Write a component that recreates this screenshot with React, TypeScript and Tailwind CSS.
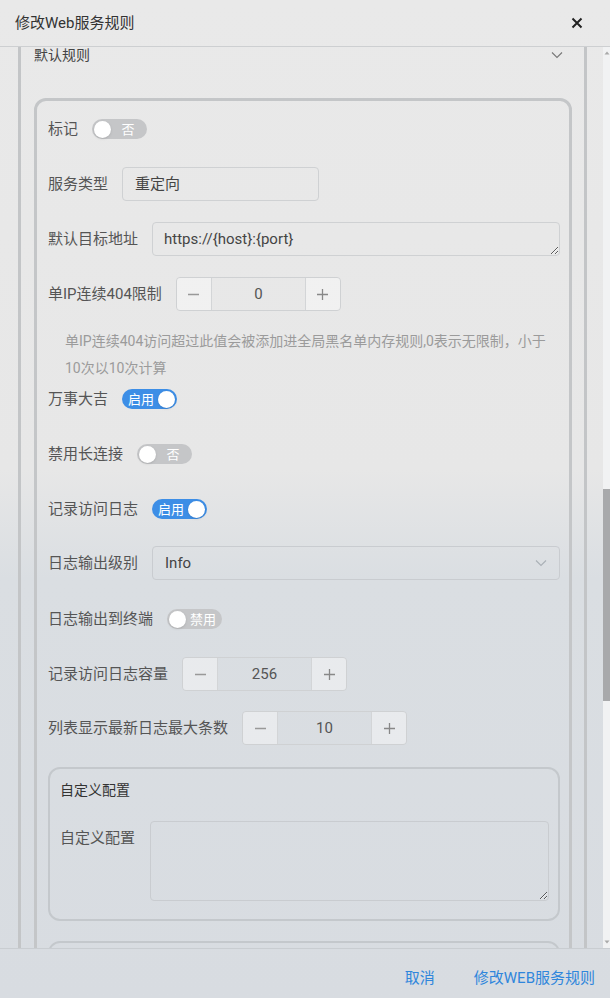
import type { ReactNode } from 'react'

function Toggle({ on, text }: { on: boolean; text: string }) {
  return (
    <span
      className={`flex h-[20px] w-[55px] shrink-0 items-center rounded-full px-[2px] ${on ? 'bg-[#3d8ee6]' : 'bg-[#c5c6c8]'}`}
    >
      {on ? null : <span className="h-[17px] w-[17px] rounded-full bg-white shadow-sm" />}
      <span className="flex-1 text-center text-[13px] leading-none text-white">{text}</span>
      {on ? <span className="h-[17px] w-[17px] rounded-full bg-white shadow-sm" /> : null}
    </span>
  )
}

function Stepper({ value }: { value: string }) {
  return (
    <div className="flex h-[34px] w-[165px] shrink-0 overflow-hidden rounded-[4px] border border-[#cfd1d3]">
      <span className="flex w-[35px] items-center justify-center border-r border-[#d3d5d7] bg-white/40">
        <svg width="13" height="13" viewBox="0 0 13 13">
          <path d="M1 6.5h11" stroke="#999" strokeWidth="1.3" />
        </svg>
      </span>
      <span className="flex flex-1 items-center justify-center text-[15px] text-[#555]">{value}</span>
      <span className="flex w-[35px] items-center justify-center border-l border-[#d3d5d7] bg-white/40">
        <svg width="13" height="13" viewBox="0 0 13 13">
          <path d="M1 6.5h11M6.5 1v11" stroke="#888" strokeWidth="1.3" />
        </svg>
      </span>
    </div>
  )
}

function Row({ label, children, className = '' }: { label: string; children: ReactNode; className?: string }) {
  return (
    <div className={`flex h-[34px] items-center gap-[14px] ${className}`}>
      <span className="shrink-0 text-[15px] text-[#555]">{label}</span>
      {children}
    </div>
  )
}

function Chevron({ color }: { color: string }) {
  return (
    <svg width="12" height="8" viewBox="0 0 12 8">
      <path d="M1 1.5l5 5 5-5" fill="none" stroke={color} strokeWidth="1.1" />
    </svg>
  )
}

export default function App() {
  return (
    <div className="flex h-[998px] w-[610px] flex-col overflow-hidden bg-[linear-gradient(180deg,#e9e9e9_0%,#e7e7e7_47%,#dadee2_58%,#d8dce1_100%)] font-['Roboto','Noto_Sans_CJK_SC',sans-serif]">
      <header className="flex h-[47px] shrink-0 items-center justify-between border-b border-[#cdcfd1] pl-[15px] pr-[27px]">
        <h1 className="text-[15px] text-[#333]">修改Web服务规则</h1>
        <svg width="12" height="12" viewBox="0 0 12 12">
          <path d="M1.5 1.5l9 9M10.5 1.5l-9 9" stroke="#222" strokeWidth="2" />
        </svg>
      </header>

      <div className="flex min-h-0 flex-1">
        <div className="min-w-0 flex-1 overflow-hidden pl-[18px] pr-[16px]">
          <div className="h-full border-x-[3px] border-[#c3c5c7] pl-[13px] pr-[12px]">
            <div className="flex h-[16px] items-center justify-between pr-[9px]">
              <span className="text-[14px] text-[#444]">默认规则</span>
              <Chevron color="#777" />
            </div>

            <section className="mt-[35px] rounded-[12px] border-[3px] border-[#c4c6c8] pb-[40px] pl-[11px] pr-[9px] pt-[11px]">
              <Row label="标记" className="mb-[21px]">
                <Toggle on={false} text="否" />
              </Row>
              <Row label="服务类型" className="mb-[21px]">
                <div className="flex h-[34px] w-[197px] items-center rounded-[4px] border border-[#cfd1d3] px-[12px] text-[15px] text-[#444]">
                  重定向
                </div>
              </Row>
              <Row label="默认目标地址" className="mb-[21px]">
                <textarea
                  readOnly
                  value="https://{host}:{port}"
                  className="h-[34px] min-w-0 flex-1 rounded-[4px] border border-[#cfd1d3] bg-transparent px-[11px] py-[5px] text-[15px] leading-[22px] text-[#444] outline-none"
                />
              </Row>
              <Row label="单IP连续404限制">
                <Stepper value="0" />
              </Row>
              <p className="mt-[17px] pl-[17px] text-[14px] leading-[27px] text-[#9b9b9b]">
                单IP连续404访问超过此值会被添加进全局黑名单内存规则,0表示无限制，小于
                <br />
                10次以10次计算
              </p>
              <Row label="万事大吉" className="mb-[21px]">
                <Toggle on text="启用" />
              </Row>
              <Row label="禁用长连接" className="mb-[21px]">
                <Toggle on={false} text="否" />
              </Row>
              <Row label="记录访问日志" className="mb-[20px]">
                <Toggle on text="启用" />
              </Row>
              <Row label="日志输出级别" className="mb-[22px]">
                <div className="flex h-[34px] min-w-0 flex-1 items-center justify-between rounded-[4px] border border-[#c9ccd0] pl-[12px] pr-[12px] text-[15px] text-[#444]">
                  <span>Info</span>
                  <Chevron color="#aab0b6" />
                </div>
              </Row>
              <Row label="日志输出到终端" className="mb-[21px]">
                <Toggle on={false} text="禁用" />
              </Row>
              <Row label="记录访问日志容量" className="mb-[20px]">
                <Stepper value="256" />
              </Row>
              <Row label="列表显示最新日志最大条数">
                <Stepper value="10" />
              </Row>

              <div className="mt-[22px] rounded-[12px] border-2 border-[#c4c8cc] pb-[18px] pl-[10px] pr-[9px] pt-[11px]">
                <h3 className="text-[14px] leading-[20px] text-[#333]">自定义配置</h3>
                <div className="mt-[21px] flex gap-[15px]">
                  <span className="shrink-0 pt-[6px] text-[15px] leading-[22px] text-[#555]">自定义配置</span>
                  <textarea
                    readOnly
                    className="h-[80px] min-w-0 flex-1 rounded-[4px] border border-[#c9ccd0] bg-transparent outline-none"
                  />
                </div>
              </div>

              <div className="mt-[20px] h-[80px] rounded-[12px] border-2 border-[#c4c8cc]" />
            </section>
          </div>
        </div>

        <div className="flex w-[7px] shrink-0 flex-col items-center bg-[#f1f2f3]">
          <svg className="mt-[4px]" width="6" height="4" viewBox="0 0 6 4">
            <path d="M3 0.5L5.5 3.5H0.5z" fill="#a9a9a9" />
          </svg>
          <div className="mt-[434px] h-[212px] w-full bg-[#a8a9ab]" />
          <div className="flex-1" />
          <svg className="mb-[4px]" width="6" height="4" viewBox="0 0 6 4">
            <path d="M3 3.5L5.5 0.5H0.5z" fill="#a9a9a9" />
          </svg>
        </div>
      </div>

      <footer className="flex h-[50px] shrink-0 items-center justify-end gap-[39px] border-t border-[#c9cdd1] pr-[15px] pt-[9px] text-[15px] text-[#2f86dc]">
        <button type="button">取消</button>
        <button type="button">修改WEB服务规则</button>
      </footer>
    </div>
  )
}
